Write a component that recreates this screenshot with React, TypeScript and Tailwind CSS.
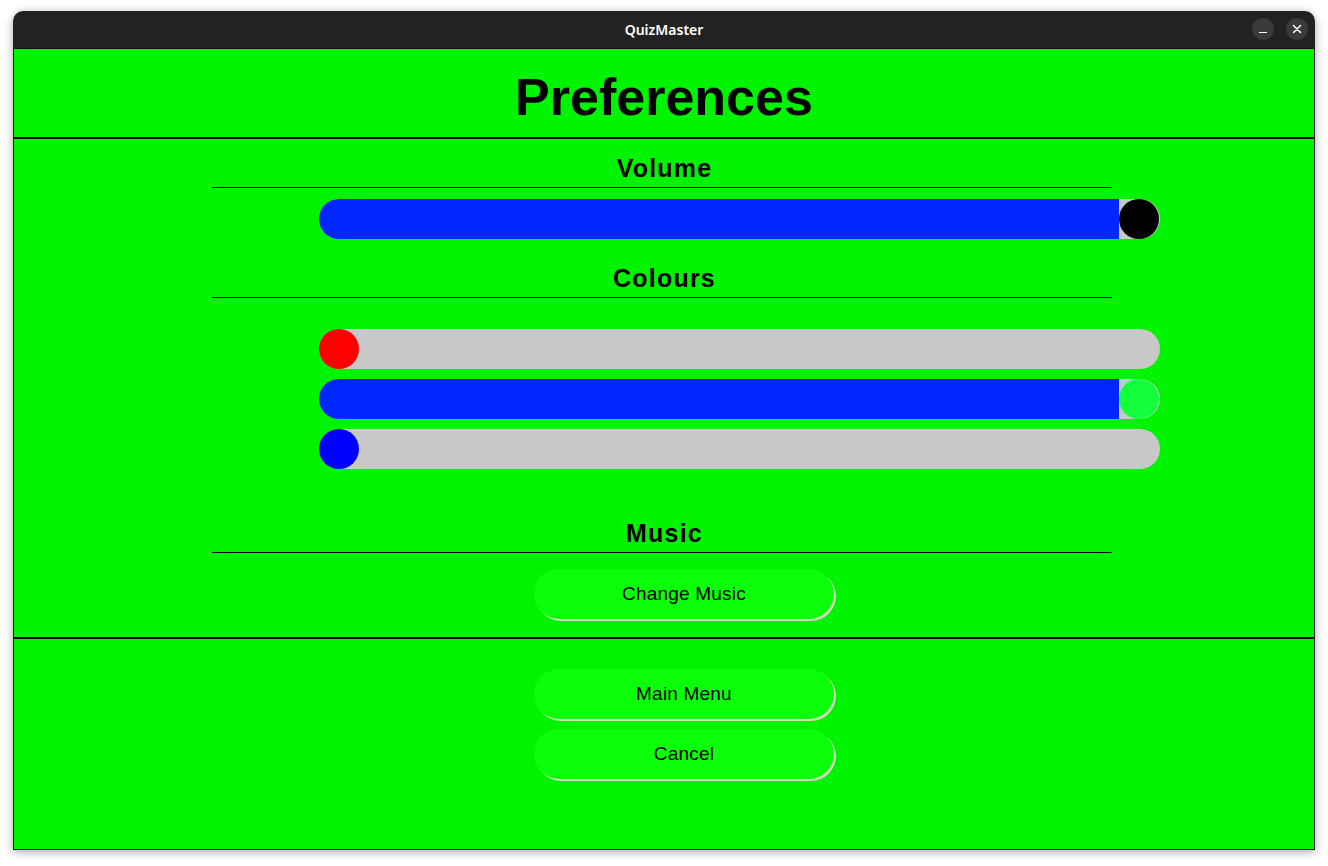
import React from "react";

const heading = "font-['Liberation_Sans',Arial,sans-serif]";

function Section({ title }: { title: string }) {
  return (
    <div className="ml-[198px] w-[900px] flex flex-col">
      <h2 className={`${heading} h-[30px] pl-[5px] text-[25px] leading-[30px] font-bold text-center tracking-[1.2px] text-black`}>
        {title}
      </h2>
      <div className="mt-[4px] h-px bg-black" />
    </div>
  );
}

interface SliderProps {
  fill: number;
  knob: string;
}

// track is 841 wide, knob 40 -> fill goes 0..800
function Slider({ fill, knob }: SliderProps) {
  return (
    <div className="ml-[305px] w-[841px] h-10 rounded-full bg-[#c8c8c8] flex">
      <div className="h-10 rounded-l-full bg-[#0026ff]" style={{ width: fill }} />
      <div className={`h-10 w-10 rounded-full shrink-0 ${knob}`} />
    </div>
  );
}

function PillButton({ label }: { label: string }) {
  return (
    <button className="ml-[520px] w-[300px] h-[50px] rounded-full bg-[#0bff0b] shadow-[2px_2px_0_#d6dcc0] font-['Liberation_Sans',Arial,sans-serif] text-[19px] tracking-[0.2px] text-black">
      {label}
    </button>
  );
}

export default function App() {
  return (
    <div className="w-[1328px] h-[866px] bg-white pt-[11px] pl-[13px]">
      <div className="w-[1302px] h-[839px] flex flex-col rounded-t-[10px] shadow-[0_2px_10px_rgba(0,0,0,0.35)]">
        {/* title bar */}
        <div className="h-[38px] bg-[#222222] rounded-t-[10px] border-b border-[#111] flex items-center relative shrink-0">
          <div className="flex-1 text-center text-white text-[14px] font-semibold font-['Noto_Sans',sans-serif]">
            QuizMaster
          </div>
          <div className="absolute right-[7px] top-[7px] flex gap-3">
            <div className="w-[22px] h-[22px] rounded-full bg-[#3a3a3a] flex items-end justify-center pb-[7px]">
              <div className="w-[8px] h-[1.5px] bg-white" />
            </div>
            <div className="w-[22px] h-[22px] rounded-full bg-[#3a3a3a] flex items-center justify-center">
              <svg width="10" height="10" viewBox="0 0 10 10" stroke="white" strokeWidth="1.5" strokeLinecap="round">
                <path d="M1.5 1.5 L8.5 8.5 M8.5 1.5 L1.5 8.5" />
              </svg>
            </div>
          </div>
        </div>

        {/* content */}
        <div className="flex-1 bg-[#00f300] border-x border-b border-[#1c1c1c] flex flex-col">
          <div className="h-[90px] border-b-2 border-black pt-[22px] shrink-0">
            <h1 className={`${heading} text-[52px] leading-none font-bold text-center text-black`}>Preferences</h1>
          </div>

          <div className="border-b-2 border-black pb-[18px] flex flex-col">
            <div className="mt-[14px]">
              <Section title="Volume" />
            </div>
            <div className="mt-[11px]">
              <Slider fill={800} knob="bg-black" />
            </div>

            <div className="mt-[24px]">
              <Section title="Colours" />
            </div>
            <div className="mt-[31px] flex flex-col gap-[10px]">
              <Slider fill={0} knob="bg-[#ff0000]" />
              <Slider fill={800} knob="bg-[#14ff3c]" />
              <Slider fill={0} knob="bg-[#0000ff]" />
            </div>

            <div className="mt-[49px]">
              <Section title="Music" />
            </div>
            <div className="mt-[16px] flex">
              <PillButton label="Change Music" />
            </div>
          </div>

          <div className="mt-[30px] flex flex-col gap-[10px]">
            <div className="flex">
              <PillButton label="Main Menu" />
            </div>
            <div className="flex">
              <PillButton label="Cancel" />
            </div>
          </div>
        </div>
      </div>
    </div>
  );
}
